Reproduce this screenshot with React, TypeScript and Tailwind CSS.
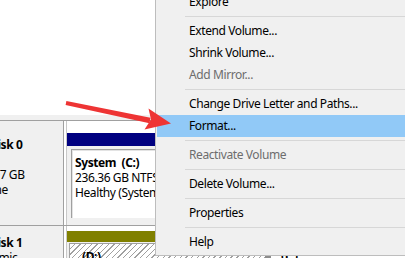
import React from "react";

type ItemProps = { label: string; disabled?: boolean; active?: boolean };

function Item({ label, disabled, active }: ItemProps) {
  return (
    <div
      className={`h-[22px] flex items-center pl-[32px] whitespace-nowrap ${active ? "bg-[#91c9f7]" : ""} ${disabled ? "text-[#6d6d6d]" : "text-black"}`}
    >
      {label}
    </div>
  );
}

function Sep() {
  return (
    <div className="h-[7px] flex items-center pl-[28px]">
      <div className="h-px w-full bg-[#d7d7d7]" />
    </div>
  );
}

export default function App() {
  return (
    <div className="relative w-[405px] h-[258px] overflow-hidden bg-white text-[12px] tracking-[-0.4px] font-['Noto_Sans',sans-serif] text-black">
      {/* top pane */}
      <div className="h-[115px] bg-white" />
      <div className="h-[5px] bg-[#f0f0f0]" />
      <div className="h-px bg-[#a0a0a0]" />

      {/* Disk 0 row */}
      <div className="flex h-[104px]">
        <div className="w-[64px] shrink-0 bg-[#f0f0f0] border-r border-[#a0a0a0] overflow-hidden">
          <div className="ml-[-29px] pt-[15.5px] leading-[15px] whitespace-nowrap">
            <div className="font-bold pl-[18px]">Disk 0</div>
            <div>Basic</div>
            <div>237.97 GB</div>
            <div className="pl-[2px]">Online</div>
          </div>
        </div>
        <div className="w-[2px] bg-white" />
        <div className="flex-1 border-l border-[#c8c8c8] flex flex-col">
          <div className="h-[12px] bg-white" />
          <div className="h-[13px] bg-[#000080]" />
          <div className="flex-1 bg-[#f0f0f0] pt-[3px] pl-[3px] pb-[7px] flex flex-col">
            <div className="flex-1 bg-white border-l border-t border-[#a0a0a0] ml-px">
              <div className="border-l border-t border-[#e3e3e3] h-full pl-[2px] pt-[3.5px] leading-[15px] whitespace-nowrap">
                <div className="font-bold">System&nbsp; (C:)</div>
                <div>236.36 GB NTFS</div>
                <div>Healthy (System, Boot, Page File)</div>
              </div>
            </div>
          </div>
        </div>
      </div>
      <div className="h-px bg-[#a0a0a0]" />

      {/* Disk 1 row */}
      <div className="flex h-[40px]">
        <div className="w-[64px] shrink-0 bg-[#f0f0f0] border-r border-[#a0a0a0] overflow-hidden">
          <div className="ml-[-29px] pt-[9px] leading-[15px] whitespace-nowrap">
            <div className="font-bold pl-[18px]">Disk 1</div>
            <div>Dynamic</div>
          </div>
        </div>
        <div className="w-[2px] bg-white" />
        <div className="flex-1 border-l border-[#c8c8c8] flex flex-col">
          <div className="h-[6px] bg-white" />
          <div className="h-[13px] bg-[#808000]" />
          <div className="flex-1 flex bg-[#f0f0f0] pt-px pl-[2px]">
            <div className="w-[196px] border-l border-t border-[#a0a0a0] bg-[repeating-linear-gradient(135deg,#ffffff_0px,#ffffff_3px,#a0a0a0_3px,#a0a0a0_4px)] pl-[12px] pt-[4px] font-bold">
              (D:)
            </div>
            <div className="w-[6px] bg-[#8c8c8c]" />
            <div className="flex-1 bg-white pl-[10px] pt-[4px] font-bold">(E:)</div>
          </div>
        </div>
      </div>

      {/* context menu */}
      <div className="absolute left-[155px] top-[-12px] w-[260px] border border-[#bdbdbd] bg-[#f0f0f0] py-[2px] px-px">
        <Item label="Explore" />
        <Sep />
        <Item label="Extend Volume..." />
        <Item label="Shrink Volume..." />
        <Item label="Add Mirror..." disabled />
        <Sep />
        <Item label="Change Drive Letter and Paths..." />
        <Item label="Format..." active />
        <Sep />
        <Item label="Reactivate Volume" disabled />
        <Sep />
        <Item label="Delete Volume..." />
        <Sep />
        <Item label="Properties" />
        <Sep />
        <Item label="Help" />
      </div>

      {/* red arrow */}
      <svg className="absolute left-0 top-0 pointer-events-none" width="405" height="258" viewBox="0 0 405 258">
        <polygon points="65.6,105 66.4,101 150.5,117.8 149.5,123.2" fill="#ee3434" />
        <polygon points="171,123.5 148.5,108.5 151,119.5 144.5,129.5" fill="#ee3434" />
      </svg>
    </div>
  );
}
